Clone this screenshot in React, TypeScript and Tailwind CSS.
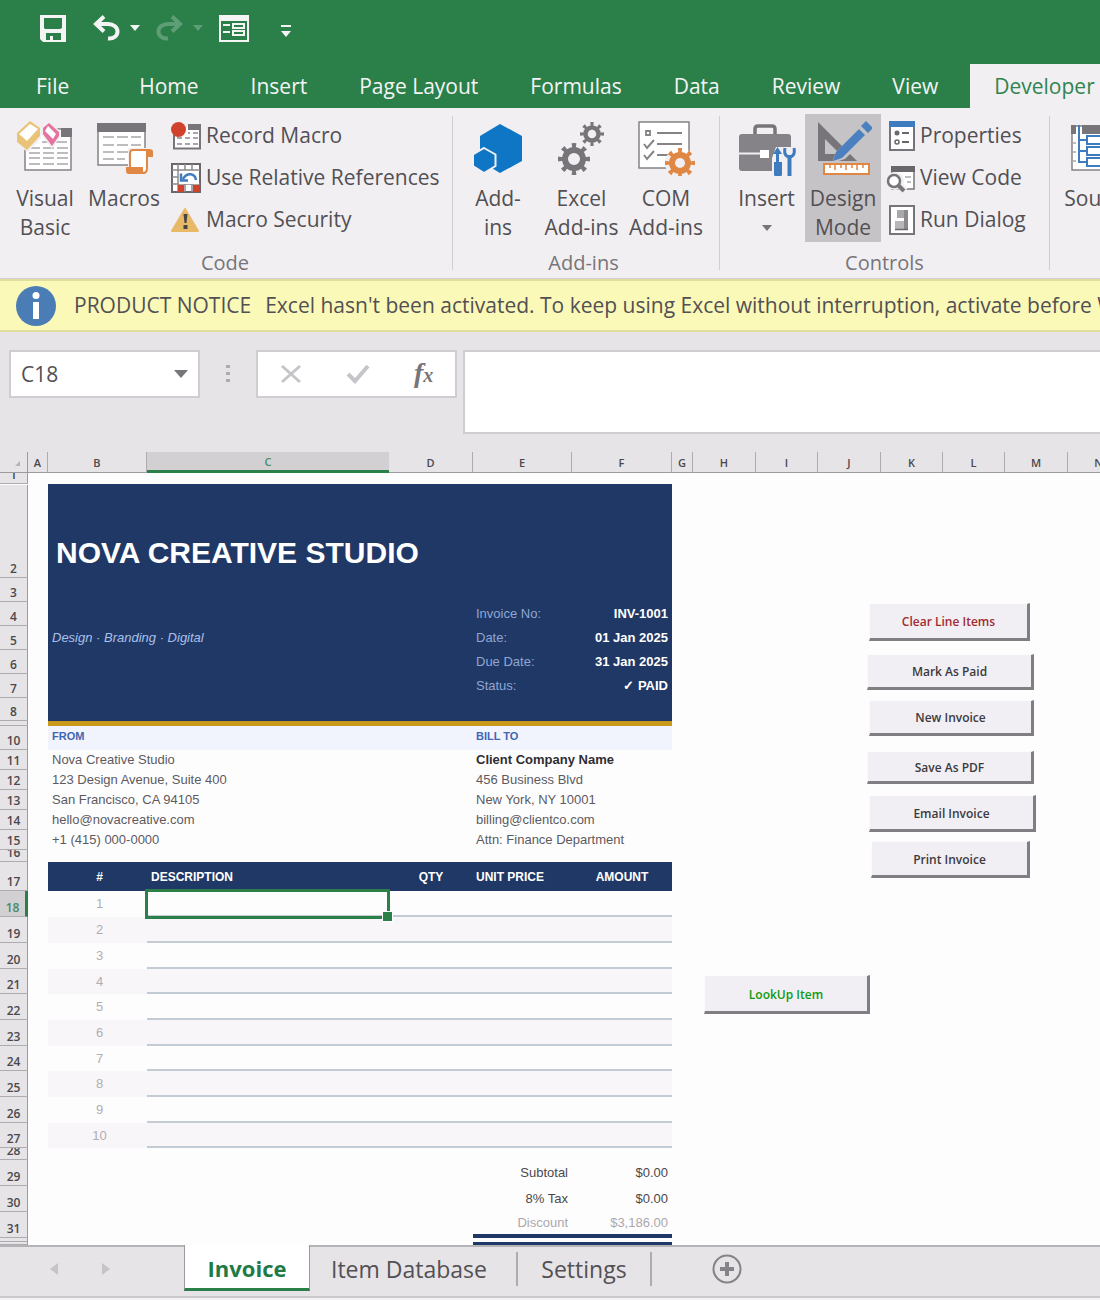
import React, { useState } from 'react';

const ribbonTabs = ['Home', 'Insert', 'Page Layout', 'Formulas', 'Data', 'Review', 'View', 'Developer'];

const columns = [
  { name: 'A', width: 'w-5' },
  { name: 'B', width: 'w-[99px]' },
  { name: 'C', width: 'w-[242px]' },
  { name: 'D', width: 'w-[84px]' },
  { name: 'E', width: 'w-[99px]' },
  { name: 'F', width: 'w-[100px]' },
  { name: 'G', width: 'w-[21px]' },
  { name: 'H', width: 'w-[63px]' },
  { name: 'I', width: 'w-[62px]' },
  { name: 'J', width: 'w-[63px]' },
  { name: 'K', width: 'w-[62px]' },
  { name: 'L', width: 'w-[62px]' },
  { name: 'M', width: 'w-[63px]' },
  { name: 'N', width: '' },
];

const metaRows = [
  { row: 4, label: 'Invoice No:', value: 'INV-1001' },
  { row: 5, label: 'Date:', value: '01 Jan 2025', left: 'Design · Branding · Digital' },
  { row: 6, label: 'Due Date:', value: '31 Jan 2025' },
  { row: 7, label: 'Status:', value: '✓ PAID' },
];

const addressRows = [
  { row: 11, from: 'Nova Creative Studio', to: 'Client Company Name' },
  { row: 12, from: '123 Design Avenue, Suite 400', to: '456 Business Blvd' },
  { row: 13, from: 'San Francisco, CA 94105', to: 'New York, NY 10001' },
  { row: 14, from: 'hello@novacreative.com', to: 'billing@clientco.com' },
  { row: 15, from: '+1 (415) 000-0000', to: 'Attn: Finance Department' },
];

const lineItems = [
  { row: 18, height: 'h-[26px]' },
  { row: 19, height: 'h-[26px]' },
  { row: 20, height: 'h-[26px]' },
  { row: 21, height: 'h-[25px]' },
  { row: 22, height: 'h-[26px]' },
  { row: 23, height: 'h-[26px]' },
  { row: 24, height: 'h-[25px]' },
  { row: 25, height: 'h-[26px]' },
  { row: 26, height: 'h-[26px]' },
  { row: 27, height: 'h-[25px]' },
];

const totals = [
  { row: 29, label: 'Subtotal', value: '$0.00', style: 'text-[#4a484c]' },
  { row: 30, label: '8% Tax', value: '$0.00', style: 'text-[#4a484c]' },
  { row: 31, label: 'Discount', value: '$3,186.00', style: 'text-[#aaa8ac] border-b-4 border-[#203866]' },
];

// Form controls float over the cells
const sheetButtons = [
  { label: 'Clear Line Items', place: 'left-[869px] top-[151px] w-[161px] h-[38px] text-[#a02c30]' },
  { label: 'Mark As Paid', place: 'left-[867px] top-[202px] w-[167px] h-9 text-[#3c3a3e]' },
  { label: 'New Invoice', place: 'left-[869px] top-[248px] w-[165px] h-9 text-[#3c3a3e]' },
  { label: 'Save As PDF', place: 'left-[867px] top-[299px] w-[167px] h-[33px] text-[#3c3a3e]' },
  { label: 'Email Invoice', place: 'left-[869px] top-[343px] w-[167px] h-[37px] text-[#3c3a3e]' },
  { label: 'Print Invoice', place: 'left-[871px] top-[389px] w-[159px] h-[37px] text-[#3c3a3e]' },
  { label: 'LookUp Item', place: 'left-[704px] top-[523px] w-[166px] h-[39px] text-[#0f9a0f]' },
];

/* Icons */

const SaveIcon = () => (
  <svg width="26" height="27" viewBox="0 0 26 27">
    <path d="M0 0h26v27H3l-3-3z" fill="#f4f4f4" />
    <path d="M4 3h18v10l-2 1H5l-1-1zM6 18h15v7h-8v-4h-3v4H6z" fill="#2b804a" />
  </svg>
);

const UndoIcon = ({ flip }: { flip?: boolean }) => (
  <svg width="27" height="26" viewBox="0 0 27 26" fill="none" className={flip ? '-scale-x-100 opacity-25' : ''}>
    <path d="M3 9h12c6 0 9.500 3.500 9.500 7.500S21 24 15 23.500" stroke="#f4f4f4" strokeWidth="4" />
    <path d="M11 1.500 3 9l8 7.500" stroke="#f4f4f4" strokeWidth="4" />
  </svg>
);

const Caret = ({ className }: { className?: string }) => (
  <svg width="10" height="6" viewBox="0 0 10 6" fill="currentColor" className={className}>
    <path d="M0 0h10L5 6z" />
  </svg>
);

const FormIcon = () => (
  <svg width="30" height="27" viewBox="0 0 30 27" fill="none" stroke="#f4f4f4">
    <rect x="1" y="1" width="28" height="25" strokeWidth="2" />
    <path d="M0 3h30" strokeWidth="6" />
    <path d="M4 10h7M4 17h7" strokeWidth="2" />
    <rect x="14" y="9" width="11" height="4" strokeWidth="2" />
    <rect x="14" y="16" width="11" height="4" strokeWidth="2" />
  </svg>
);

const OverflowIcon = () => (
  <svg width="10" height="12" viewBox="0 0 10 12" fill="#f4f4f4">
    <path d="M0 0h10v2H0zM0 6h10l-5 6z" />
  </svg>
);

const VisualBasicIcon = () => (
  <svg width="58" height="56" viewBox="0 0 58 56" fill="none">
    <rect x="9" y="9" width="46" height="41" fill="#fff" stroke="#858387" strokeWidth="1.500" />
    <path d="M45 8h11v9H45z" fill="#777579" />
    <path d="M13 22h8m5 0h11m3 0h11M13 28h11m3 0h11m3 0h11M13 33h11m3 0h11m3 0h11M13 38h11m3 0h11m3 0h11M13 44h11m3 0h11m3 0h11" stroke="#a9a7ab" strokeWidth="1.500" />
    <path d="M-1 10 14-1l11 7v12L12 32-1 24z" fill="#f1eff2" />
    <path d="M14 1l10 7v8L11 30 1 22v-9z" fill="#e9c377" />
    <path d="M14 4l8 5-11 12-8-7z" fill="#fff" />
    <path d="M33 1 44 11v6l-8 12-11-15V7z" fill="#f1eff2" />
    <path d="M33 3l10 9v4l-7 10-9-12V8z" fill="#e5739f" />
    <path d="M32 6l8 8-3 5-8-8z" fill="#fff" />
  </svg>
);

const MacrosIcon = () => (
  <svg width="58" height="56" viewBox="0 0 58 56" fill="none">
    <rect x="3" y="4" width="47" height="41" fill="#fff" stroke="#858387" strokeWidth="1.500" />
    <path d="M2 3h49v9H2z" fill="#777579" />
    <path d="M8 17h11m3 0h11m3 0h10M8 25h11m3 0h11m3 0h10M8 32h11m3 0h11M8 39h11m3 0h8" stroke="#a9a7ab" strokeWidth="1.500" />
    <path d="M33 28h25v27H31v-9h2z" fill="#f1eff2" />
    <path d="M35 48V33c0-2 1-3 3-3h14v18c0 3-1 5-4 5H37z" fill="#fff" stroke="#e08744" strokeWidth="2" />
    <path d="M31 47h17v3c0 2 1 4 3 4H34c-2 0-3-1-3-3zM51 29h3c3 0 4 1 4 3v5h-5z" fill="#e08744" />
  </svg>
);

const RecordIcon = () => (
  <svg width="30" height="30" viewBox="0 0 30 30" fill="none">
    <path d="M3 14v13.500h26V5H18" fill="#fff" stroke="#777579" strokeWidth="2" />
    <path d="M17 3h13v6H17z" fill="#777579" />
    <path d="M6 17h5m3 0h5m3 0h5M6 23h5m3 0h5m3 0h5M17 12h2m3 0h5" stroke="#a9a7ab" strokeWidth="2" />
    <circle cx="7.500" cy="8.500" r="7.500" fill="#d0422c" />
  </svg>
);

const RelativeIcon = () => (
  <svg width="30" height="30" viewBox="0 0 30 30" fill="none">
    <rect x="1" y="1" width="28" height="28" fill="#fff" stroke="#69676b" strokeWidth="2" />
    <path d="M7 1v28M1 7h28M14 1v6M21 1v6M1 14h6M1 21h28M14 21v8M21 21v8" stroke="#8b898d" strokeWidth="1.500" />
    <path d="M8 8h20v13H8z" fill="#fff" />
    <path d="M7 22h6v7H7zM22 22h6v7h-6z" fill="#d0422c" />
    <path d="M25 17c-1-7-9-8-13-1M10 10.500v7h7" stroke="#3f7cbf" strokeWidth="2.500" />
  </svg>
);

const WarningIcon = () => (
  <svg width="30" height="30" viewBox="0 0 30 30">
    <path d="M14 4 27 26H1z" fill="#e8b966" stroke="#e8b966" strokeWidth="2" strokeLinejoin="round" />
    <path d="M12.500 9h4l-1 9h-2zM12.500 20h4v4h-4z" fill="#47454a" />
  </svg>
);

const HexIcon = () => (
  <svg width="58" height="56" viewBox="0 0 58 56">
    <path d="M31 4l22 12v25L31 53 11 41V16z" fill="#0e76c4" />
    <path d="M15 28l11.500 6.500V46L15 53 4 46V34.500z" fill="#0e76c4" stroke="#f1eff2" strokeWidth="2" />
  </svg>
);

interface GearProps {
  cx: number;
  cy: number;
  r: number;
  width: number;
  color: string;
}

const Gear = ({ cx, cy, r, width, color }: GearProps) => (
  <g fill="none" stroke={color}>
    <circle cx={cx} cy={cy} r={r} strokeWidth={width} />
    <circle
      cx={cx}
      cy={cy}
      r={r + width / 2 + 1}
      strokeWidth={width}
      pathLength={16}
      strokeDasharray="0.800 1.200"
      strokeDashoffset="0.400"
    />
  </g>
);

const GearsIcon = () => (
  <svg width="58" height="56" viewBox="0 0 58 56">
    <Gear cx={21} cy={39} r={9} width={6} color="#777579" />
    <Gear cx={39} cy={14} r={6.5} width={4.5} color="#777579" />
  </svg>
);

const ComIcon = () => (
  <svg width="58" height="56" viewBox="0 0 58 56" fill="none">
    <rect x="2" y="2" width="50" height="46" fill="#fff" stroke="#858387" strokeWidth="1.500" />
    <path d="M9 11h4v4H9zM20 13h25M20 24h25M20 35h11" stroke="#858387" strokeWidth="1.800" />
    <path d="M7 24l3 4 7-8M7 35l3 4 7-8" stroke="#858387" strokeWidth="2" />
    <circle cx="43" cy="43" r="15" fill="#f1eff2" />
    <path d="M32 28h19v5l-8-2-10 6z" fill="#fff" />
    <Gear cx={43} cy={43} r={8} width={6} color="#e08744" />
  </svg>
);

const ToolboxIcon = () => (
  <svg width="58" height="56" viewBox="0 0 58 56" fill="none">
    <path d="M17 14V9c0-2 1-3 3-3h14c2 0 3 1 3 3v5" stroke="#777579" strokeWidth="3.500" />
    <rect x="1" y="14" width="52" height="37" rx="3" fill="#858387" />
    <path d="M1 33.500h24" stroke="#f1eff2" strokeWidth="2" />
    <path d="M22 30h9v8h-9z" fill="#fff" />
    <path d="M34 38l4-11h20v29H34z" fill="#f1eff2" />
    <path d="M39.500 27l4.500 7h-3v8h3v12c0 2-1 3-4 3s-4-1-4-3V42h2v-8h-3z" fill="#3f7cbf" />
    <path d="M47 28c-1 5 0 8 4 9M56 28c1 5 0 8-4 9" stroke="#3f7cbf" strokeWidth="3" />
    <path d="M51.500 35v21" stroke="#3f7cbf" strokeWidth="4" />
  </svg>
);

const DesignIcon = () => (
  <svg width="58" height="56" viewBox="0 0 58 56" fill="none">
    <path fillRule="evenodd" d="M4 2l39 39H4zm7 17v15h15z" fill="#777579" />
    <path d="M18 43l4-11L49 6l8 7-26 26z" fill="#c6c3c7" />
    <path d="M19 41l3-9L45 9l6 6-23 23zM47 6l5-5 7 7-5 5z" fill="#4a80c0" />
    <rect x="10" y="44" width="45" height="10" fill="#fff" stroke="#e08744" strokeWidth="2" />
    <path d="M16 45v3m5-3v5m6-5v3m5-3v5m6-5v3m5-3v5m6-5v3" stroke="#e08744" strokeWidth="1.500" />
  </svg>
);

const PropertiesIcon = () => (
  <svg width="26" height="30" viewBox="0 0 26 30" fill="none">
    <rect x="1" y="1" width="24" height="28" fill="#fff" stroke="#777579" strokeWidth="2" />
    <path d="M0 0h26v6H0z" fill="#3f7cbf" />
    <circle cx="8" cy="12" r="2.500" fill="#69676b" />
    <circle cx="8" cy="21" r="2" stroke="#69676b" strokeWidth="1.500" />
    <path d="M13 12h7M13 21h7" stroke="#69676b" strokeWidth="2" />
  </svg>
);

const ViewCodeIcon = () => (
  <svg width="26" height="30" viewBox="0 0 26 30" fill="none" overflow="visible">
    <path d="M3 4h22v22H3z" fill="#fff" stroke="#777579" strokeWidth="1.500" />
    <path d="M2 3h24v6H2z" fill="#69676b" />
    <path d="M16 14h6M18 19h4" stroke="#a9a7ab" strokeWidth="1.500" />
    <circle cx="6" cy="18" r="9" fill="#f1eff2" />
    <path d="M6 18l10 10" stroke="#f1eff2" strokeWidth="7" />
    <circle cx="5" cy="18" r="6" fill="#fff" stroke="#777579" strokeWidth="2.500" />
    <path d="M9 22l6 6" stroke="#777579" strokeWidth="4" />
  </svg>
);

const RunDialogIcon = () => (
  <svg width="26" height="30" viewBox="0 0 26 30" fill="none">
    <rect x="1" y="1" width="24" height="28" fill="#fff" stroke="#777579" strokeWidth="2" />
    <path d="M8 5h11v8H8z" fill="#a9a7ab" />
    <path d="M15 5h4v20h-4z" fill="#8b898d" />
    <path d="M6 16h9v8H6z" fill="#b9b6ba" />
    <path d="M6 24.500h13" stroke="#69676b" strokeWidth="1.500" />
  </svg>
);

const SourceIcon = () => (
  <svg width="58" height="56" viewBox="0 0 58 56" fill="none">
    <rect x="3" y="6" width="50" height="44" fill="#fff" stroke="#858387" strokeWidth="1.500" />
    <path d="M2 5h5v9H2zM13 5h42v9H13z" fill="#777579" />
    <path d="M3 23h4M3 32h4M3 41h4" stroke="#a9a7ab" strokeWidth="1.500" />
    <path d="M10 5v37h8M10 20h8M10 31h8" stroke="#3f7cbf" strokeWidth="2" />
    <path d="M18 16h30v8H18zM18 27h30v8H18zM18 38h30v8H18z" fill="#fff" stroke="#3f7cbf" strokeWidth="2" />
  </svg>
);

const InfoIcon = () => (
  <svg width="40" height="40" viewBox="0 0 40 40" className="shrink-0">
    <circle cx="20" cy="20" r="20" fill="#4a7db5" />
    <circle cx="20" cy="9.500" r="3.500" fill="#fff" />
    <path d="M17 16h6v17h-6z" fill="#fff" />
  </svg>
);

/* Ribbon */

interface BigButtonProps {
  icon: React.ReactNode;
  lines: string[];
  width: string;
  active?: boolean;
  dropdown?: boolean;
}

const BigButton = ({ icon, lines, width, active, dropdown }: BigButtonProps) => (
  <button
    className={`flex h-32 shrink-0 flex-col items-center pt-1.5 whitespace-nowrap ${width} ${
      active ? 'bg-[#c6c3c7]' : ''
    }`}
  >
    {icon}
    <span className="mt-2 leading-[29px]">
      {lines.map((line) => (
        <span key={line} className="block">
          {line}
        </span>
      ))}
    </span>
    {dropdown && <Caret className="mt-3 text-[#777579]" />}
  </button>
);

const SmallButton = ({ icon, label }: { icon: React.ReactNode; label: string }) => (
  <button className="flex h-[42px] items-center whitespace-nowrap">
    <span className="mr-[5px] shrink-0">{icon}</span>
    {label}
  </button>
);

const RibbonGroup = ({ label, width, children }: { label: string; width: string; children: React.ReactNode }) => (
  <section className={`flex shrink-0 flex-col pt-1.5 ${width}`}>
    <div className="flex">{children}</div>
    <p className="mt-1.5 pr-2 text-center text-xl leading-[30px] text-[#777579]">{label}</p>
  </section>
);

const Divider = () => <div className="my-2 w-px shrink-0 bg-[#d0ced2]" />;

/* Worksheet */

const RowHead = ({ row, height, selected }: { row?: number; height: string; selected?: boolean }) => (
  <th scope="row" className="p-0 font-semibold">
    <div
      className={`flex items-end justify-center overflow-hidden border-b border-b-[#aeacb0] leading-4 ${height} ${
        selected ? 'border-r-3 border-r-[#2b804a] bg-[#d2d0d3] text-[#4a8a66]' : 'border-r border-r-[#9c9a9e] bg-[#e6e4e7]'
      }`}
    >
      {row}
    </div>
  </th>
);

const Worksheet = () => (
  <table className="w-full min-w-[1130px] table-fixed border-separate border-spacing-0 text-left">
    <colgroup>
      <col className="w-7" />
      {columns.map((col) => (
        <col key={col.name} className={col.width} />
      ))}
    </colgroup>
    <thead className="bg-[#e6e4e7] text-center font-['Open_Sans',sans-serif] text-[11px] leading-4 text-[#4a484c]">
      <tr>
        <th className="border-r border-b border-[#9c9a9e] p-0">
          <svg width="28" height="20" viewBox="0 0 28 20" fill="#b5b3b7">
            <path d="M20 9v5h-5z" />
          </svg>
        </th>
        {columns.map((col) => (
          <th
            key={col.name}
            scope="col"
            className={`h-[21px] p-0 pt-0.5 font-semibold ${
              col.name === 'C'
                ? 'border-b-3 border-[#2b804a] bg-[#d2d0d3] text-[#4a8a66]'
                : 'border-r border-b border-r-[#aeacb0] border-b-[#9c9a9e]'
            }`}
          >
            {col.name}
          </th>
        ))}
      </tr>
    </thead>
    <tbody className="font-['Liberation_Sans',Arial,sans-serif] text-[13px] leading-4 text-[#5c5a5e] [&_th]:font-['Open_Sans',sans-serif] [&_th]:text-xs [&_th]:text-[#4a484c]">
      <tr>
        <RowHead row={1} height="h-[11px]" />
        <td colSpan={14} className="p-0" />
      </tr>
      <tr>
        <RowHead row={2} height="h-[93px]" />
        <td className="p-0" />
        <td colSpan={5} className="bg-[#203866] p-0 pt-11 pl-2 align-top text-3xl leading-[50px] font-bold whitespace-nowrap text-white">
          NOVA CREATIVE STUDIO
        </td>
        <td colSpan={8} className="p-0" />
      </tr>
      <tr>
        <RowHead row={3} height="h-6" />
        <td className="p-0" />
        <td colSpan={5} className="bg-[#203866] p-0" />
        <td colSpan={8} className="p-0" />
      </tr>
      {metaRows.map((item) => (
        <tr key={item.row}>
          <RowHead row={item.row} height="h-6" />
          <td className="p-0" />
          <td colSpan={3} className="bg-[#203866] p-0 pl-1 text-[#a9c0ea] italic">
            {item.left}
          </td>
          <td className="bg-[#203866] p-0 pl-[3px] text-[#8fa6d2]">{item.label}</td>
          <td className="bg-[#203866] p-0 pr-1 text-right font-bold text-white">{item.value}</td>
          <td colSpan={8} className="p-0" />
        </tr>
      ))}
      <tr>
        <RowHead row={8} height="h-[23px]" />
        <td className="p-0" />
        <td colSpan={5} className="bg-[#203866] p-0" />
        <td colSpan={8} className="p-0" />
      </tr>
      <tr>
        <RowHead height="h-[5px]" />
        <td className="p-0" />
        <td colSpan={5} className="bg-[#c9991a] p-0" />
        <td colSpan={8} className="p-0" />
      </tr>
      <tr className="text-[11px] font-bold text-[#3f66b0]">
        <RowHead row={10} height="h-6" />
        <td className="p-0" />
        <td colSpan={3} className="bg-[#f2f4fd] p-0 pb-1 pl-1">FROM</td>
        <td colSpan={2} className="bg-[#f2f4fd] p-0 pb-1 pl-[3px]">BILL TO</td>
        <td colSpan={8} className="p-0" />
      </tr>
      {addressRows.map((item, index) => (
        <tr key={item.row}>
          <RowHead row={item.row} height="h-5" />
          <td className="p-0" />
          <td colSpan={3} className="p-0 pl-1">{item.from}</td>
          <td colSpan={2} className={`p-0 pl-[3px] ${index === 0 ? 'font-bold text-[#2f2d31]' : ''}`}>
            {item.to}
          </td>
          <td colSpan={8} className="p-0" />
        </tr>
      ))}
      <tr>
        <RowHead row={16} height="h-3" />
        <td colSpan={14} className="p-0" />
      </tr>
      <tr className="text-xs font-bold text-white">
        <RowHead row={17} height="h-[29px]" />
        <td className="p-0" />
        <td className="bg-[#203866] p-0 pl-1 text-center">#</td>
        <td className="bg-[#203866] p-0 pl-1">DESCRIPTION</td>
        <td className="bg-[#203866] p-0 text-center">QTY</td>
        <td className="bg-[#203866] p-0 pl-[3px]">UNIT PRICE</td>
        <td className="bg-[#203866] p-0 text-center">AMOUNT</td>
        <td colSpan={8} className="p-0" />
      </tr>
      {lineItems.map((item, index) => (
        <tr key={item.row}>
          <RowHead row={item.row} height={item.height} selected={index === 0} />
          <td className="p-0" />
          <td className={`p-0 pl-1 text-center text-[#b0aeb2] ${index % 2 ? 'bg-[#f8f6f9]' : ''}`}>{index + 1}</td>
          <td colSpan={4} className={`relative border-b-2 border-[#c3ccd5] p-0 ${index % 2 ? 'bg-[#f8f6f9]' : ''}`}>
            {index === 0 && (
              <div className="absolute -top-0.5 -bottom-1 -left-0.5 z-10 w-[245px] border-3 border-[#2b804a]">
                <span className="absolute -right-1.5 -bottom-1.5 size-[11px] border border-white bg-[#2b804a]" />
              </div>
            )}
          </td>
          <td colSpan={8} className="p-0" />
        </tr>
      ))}
      <tr>
        <RowHead row={28} height="h-3" />
        <td colSpan={14} className="p-0" />
      </tr>
      {totals.map((item) => (
        <tr key={item.row}>
          <RowHead row={item.row} height="h-[26px]" />
          <td colSpan={4} className="p-0" />
          <td className={`p-0 pr-1 text-right ${item.style}`}>{item.label}</td>
          <td className={`p-0 pr-1 text-right ${item.style}`}>{item.value}</td>
          <td colSpan={8} className="p-0" />
        </tr>
      ))}
      <tr>
        <RowHead height="h-1" />
        <td colSpan={14} className="p-0" />
      </tr>
      <tr>
        <RowHead height="h-[3px]" />
        <td colSpan={4} className="p-0" />
        <td colSpan={2} className="bg-[#203866] p-0" />
        <td colSpan={8} className="p-0" />
      </tr>
    </tbody>
  </table>
);

const App: React.FC = () => {
  const [activeTab, setActiveTab] = useState('Developer');
  const [cellName, setCellName] = useState('C18');

  return (
    <div className="flex min-h-screen flex-col overflow-hidden bg-[#f4f2f5] font-['Open_Sans','Noto_Sans',sans-serif] text-[21px] text-[#525054]">
      {/* Title bar and ribbon tabs */}
      <header className="bg-[#2b804a] text-[#f4f4f4]">
        <div className="flex h-14 items-center pl-10">
          <button aria-label="Save"><SaveIcon /></button>
          <button aria-label="Undo" className="ml-[27px]"><UndoIcon /></button>
          <button aria-label="Undo history" className="ml-2.5"><Caret /></button>
          <button aria-label="Redo" className="ml-4"><UndoIcon flip /></button>
          <button aria-label="Redo history" className="ml-2.5 opacity-25"><Caret /></button>
          <button aria-label="Form" className="ml-4"><FormIcon /></button>
          <button aria-label="Customize toolbar" className="mt-1.5 ml-8"><OverflowIcon /></button>
        </div>
        <nav className="mt-2 flex h-11">
          <button className="mr-11 shrink-0 pt-0.5 pl-9">File</button>
          {ribbonTabs.map((tab) => (
            <button
              key={tab}
              onClick={() => setActiveTab(tab)}
              className={`shrink-0 pt-0.5 pr-[26px] whitespace-nowrap ${
                activeTab === tab ? 'ml-1.5 bg-[#f1eff2] pl-6 text-[#2f8450]' : 'pl-[26px]'
              }`}
            >
              {tab}
            </button>
          ))}
        </nav>
      </header>

      {/* Ribbon */}
      <div className="flex overflow-hidden border-b border-[#d0ced2] bg-[#f1eff2]">
        <RibbonGroup label="Code" width="w-[452px] pl-1.5">
          <BigButton icon={<VisualBasicIcon />} lines={['Visual', 'Basic']} width="w-[78px]" />
          <BigButton icon={<MacrosIcon />} lines={['Macros']} width="w-20" />
          <div className="ml-[7px] pt-px">
            <SmallButton icon={<RecordIcon />} label="Record Macro" />
            <SmallButton icon={<RelativeIcon />} label="Use Relative References" />
            <SmallButton icon={<WarningIcon />} label="Macro Security" />
          </div>
        </RibbonGroup>
        <Divider />
        <RibbonGroup label="Add-ins" width="w-[266px] pl-[3px]">
          <BigButton icon={<HexIcon />} lines={['Add-', 'ins']} width="w-[84px]" />
          <BigButton icon={<GearsIcon />} lines={['Excel', 'Add-ins']} width="w-[83px]" />
          <BigButton icon={<ComIcon />} lines={['COM', 'Add-ins']} width="w-[86px]" />
        </RibbonGroup>
        <Divider />
        <RibbonGroup label="Controls" width="w-[329px] pl-2">
          <BigButton icon={<ToolboxIcon />} lines={['Insert']} width="w-[77px]" dropdown />
          <BigButton icon={<DesignIcon />} lines={['Design', 'Mode']} width="w-[76px]" active />
          <div className="ml-2 pt-px">
            <SmallButton icon={<PropertiesIcon />} label="Properties" />
            <SmallButton icon={<ViewCodeIcon />} label="View Code" />
            <SmallButton icon={<RunDialogIcon />} label="Run Dialog" />
          </div>
        </RibbonGroup>
        <Divider />
        <RibbonGroup label="XML" width="w-[320px] pl-1.5">
          <BigButton icon={<SourceIcon />} lines={['Source']} width="w-[84px]" />
        </RibbonGroup>
      </div>

      {/* Activation notice */}
      <div className="flex h-[53px] items-center overflow-hidden border-y-2 border-[#dfde9c] bg-[#fbf9b8] pl-4 whitespace-nowrap">
        <InfoIcon />
        <strong className="ml-[18px] font-normal">PRODUCT NOTICE</strong>
        <p className="ml-3.5">
          Excel hasn't been activated. To keep using Excel without interruption, activate before Wednesday
        </p>
      </div>

      {/* Formula bar */}
      <div className="flex items-start bg-[#e6e4e7] py-[18px] pl-[9px]">
        <div className="flex h-12 w-[191px] shrink-0 items-center border-2 border-[#cfcdd1] bg-white px-2.5">
          <input
            aria-label="Name box"
            value={cellName}
            onChange={(e) => setCellName(e.target.value)}
            className="w-full min-w-0 bg-transparent pt-0.5 outline-none"
          />
          <button aria-label="Named ranges">
            <svg width="14" height="8" viewBox="0 0 14 8" fill="#777579"><path d="M0 0h14L7 8z" /></svg>
          </button>
        </div>
        <svg width="56" height="48" viewBox="0 0 56 48" fill="#aeacb0" className="shrink-0">
          <path d="M26 15h4v3h-4zM26 22h4v3h-4zM26 29h4v3h-4z" />
        </svg>
        <div className="flex h-12 w-[201px] shrink-0 items-center border-2 border-[#cfcdd1] bg-white pl-[22px]">
          <button aria-label="Cancel">
            <svg width="22" height="20" viewBox="0 0 22 20" stroke="#c6c4c8" strokeWidth="3"><path d="M2 2l18 16M20 2L2 18" /></svg>
          </button>
          <button aria-label="Enter" className="ml-11">
            <svg width="24" height="20" viewBox="0 0 24 20" fill="none" stroke="#c6c4c8" strokeWidth="4"><path d="M2 10l7 7L22 2" /></svg>
          </button>
          <button aria-label="Insert function" className="ml-11 font-['Liberation_Serif',serif] text-[28px] leading-7 font-bold text-[#777579] italic">
            f<span className="text-xl leading-7">x</span>
          </button>
        </div>
        <textarea
          aria-label="Formula"
          className="ml-1.5 h-[84px] min-w-0 flex-1 resize-none border-2 border-r-0 border-[#cfcdd1] bg-white outline-none"
        />
      </div>

      {/* Worksheet with floating form buttons */}
      <main className="relative overflow-hidden bg-[#fefdfe]">
        <Worksheet />
        {sheetButtons.map((button) => (
          <button
            key={button.label}
            className={`absolute border-t border-r-3 border-b-3 border-l border-t-[#fbfafc] border-r-[#807e82] border-b-[#807e82] border-l-[#fbfafc] bg-[#f1eff3] pt-0.5 text-xs font-semibold ${button.place}`}
          >
            {button.label}
          </button>
        ))}
      </main>

      {/* Sheet tabs */}
      <footer className="flex h-[53px] items-start border-b-2 border-[#cbc9cd] bg-[#e6e4e7] text-[22px]">
        <div className="flex h-[46px] w-[184px] shrink-0 items-center gap-11 border-t-2 border-[#b5b3b7] pl-[50px]">
          <button aria-label="Previous sheet">
            <svg width="8" height="12" viewBox="0 0 8 12" fill="#c6c4c8"><path d="M8 0v12L0 6z" /></svg>
          </button>
          <button aria-label="Next sheet">
            <svg width="8" height="12" viewBox="0 0 8 12" fill="#c6c4c8"><path d="M0 0v12l8-6z" /></svg>
          </button>
        </div>
        <button className="h-[46px] w-[126px] shrink-0 border-x border-b-3 border-x-[#9c9a9e] border-b-[#2b804a] bg-white pt-1 font-bold text-[#1f7a48]">
          Invoice
        </button>
        <div className="flex h-[46px] flex-1 items-center border-t-2 border-[#b5b3b7]">
          <button className="w-[208px] border-r-2 border-[#aeacb0] pr-2 text-[23px] whitespace-nowrap">Item Database</button>
          <button className="w-[134px] border-r-2 border-[#aeacb0] text-[23px]">Settings</button>
          <button aria-label="New sheet" className="ml-[60px]">
            <svg width="30" height="30" viewBox="0 0 30 30" fill="none" stroke="#858387">
              <circle cx="15" cy="15" r="13.500" strokeWidth="2" />
              <path d="M15 8v14M8 15h14" strokeWidth="4" />
            </svg>
          </button>
        </div>
      </footer>
    </div>
  );
};

export default App;
